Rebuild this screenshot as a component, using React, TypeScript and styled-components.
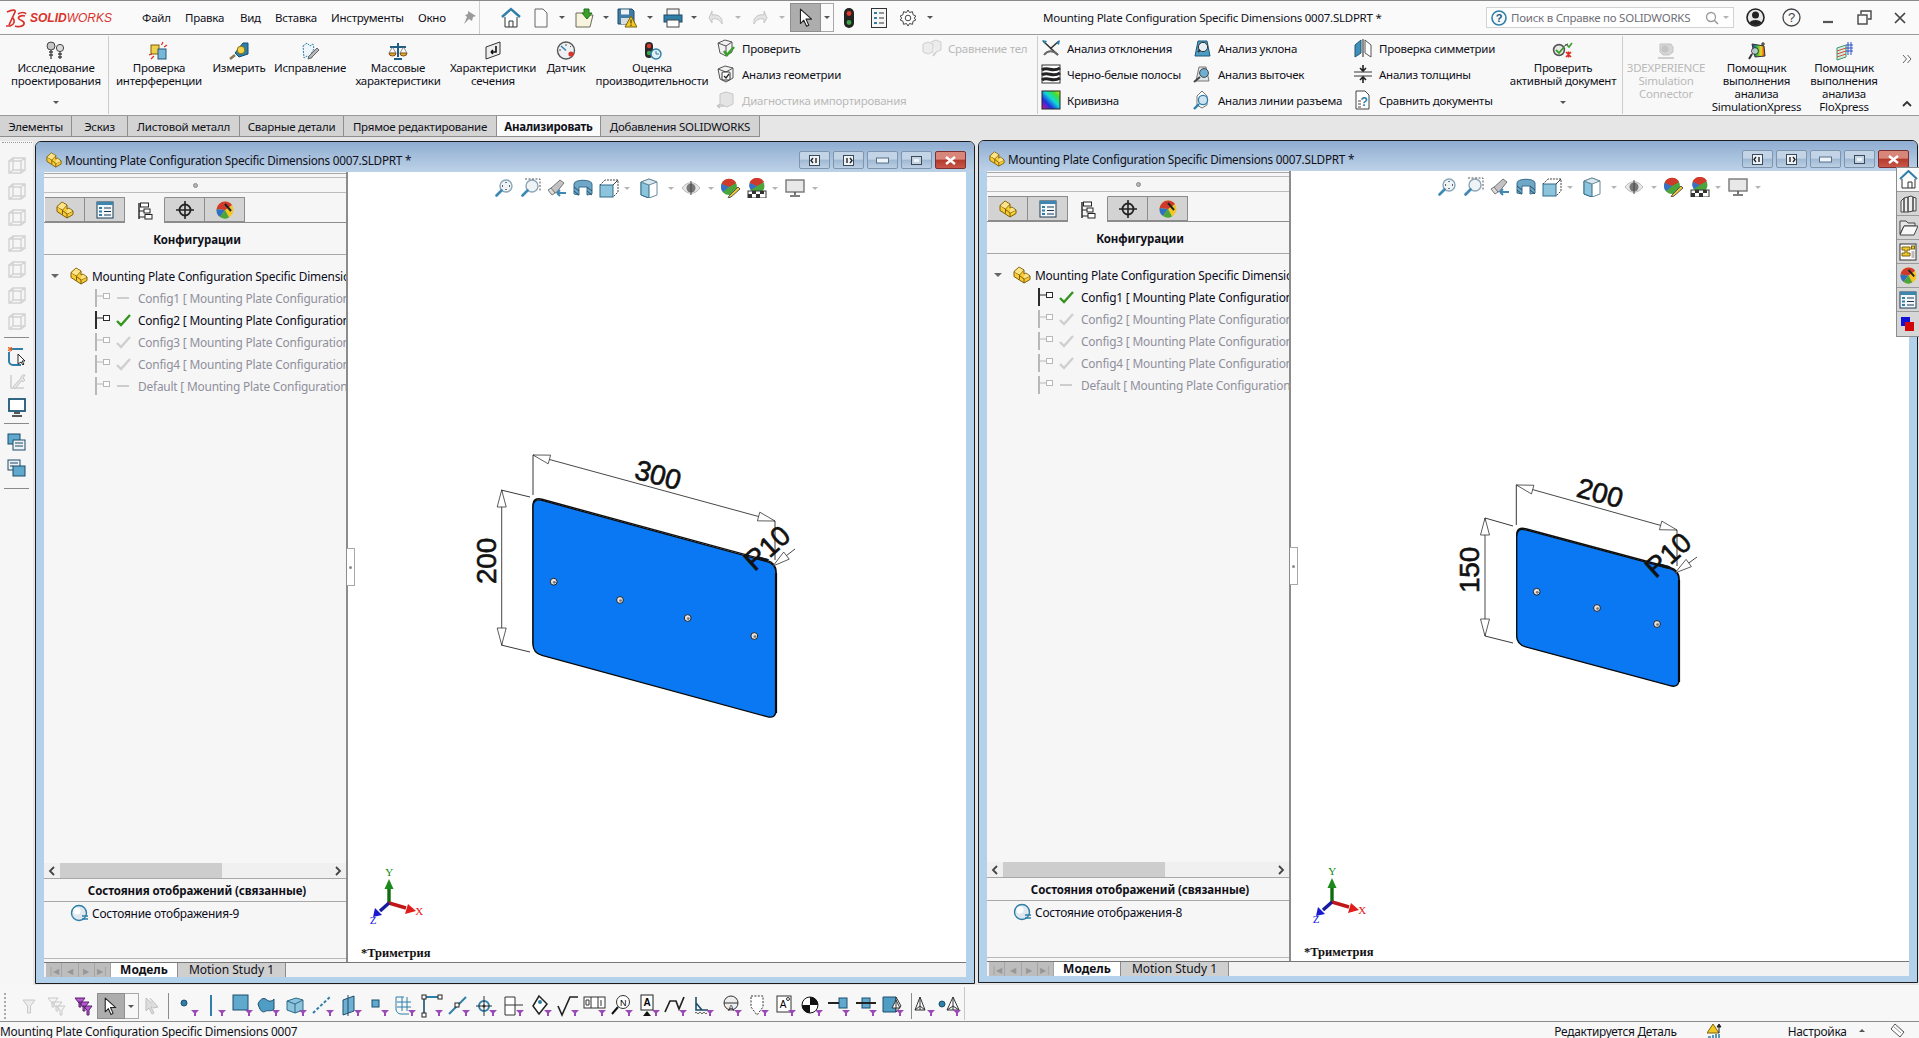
import React from 'react';
import styled, { createGlobalStyle } from 'styled-components';

const UI = '"Noto Sans", "Open Sans", sans-serif';

const Global = createGlobalStyle`
  html, body { margin: 0; padding: 0; background: #f5f5f5; overflow: hidden; }
  body { font-family: ${UI}; font-size: 11.5px; color: #101018; }
`;

const Root = styled.div`
  width: 1919px;
  height: 1038px;
  display: flex;
  flex-direction: column;
  overflow: hidden;
  letter-spacing: -0.25px;
`;

const Glyph = styled.svg`
  display: block;
  flex: none;
`;

const Ico: React.FC<{ w?: number; h?: number; vb?: string; children: React.ReactNode }> = ({ w = 20, h = 20, vb, children }) => (
  <Glyph width={w} height={h} viewBox={vb || `0 0 ${w} ${h}`}>{children}</Glyph>
);

/* ---------- title bar ---------- */

const TitleBar = styled.header`
  height: 34px;
  box-sizing: border-box;
  border-top: 1px solid #8a8a8a;
  background: #fafafa;
  display: flex;
  align-items: center;
`;

const Logo = styled.div`
  width: 142px;
  padding-left: 5px;
  box-sizing: border-box;
  display: flex;
  align-items: center;
  gap: 3px;
  color: #d9312b;
  font-family: "Liberation Sans", sans-serif;
  font-size: 12px;
  letter-spacing: 0;
  b { font-weight: 700; font-style: italic; }
  span { font-style: italic; font-weight: 400; }
`;

const Menu = styled.nav`
  display: flex;
  width: 338px;
  height: 100%;
  align-items: center;
  box-sizing: border-box;
  border-right: 1px solid #cfcfcf;
`;

const MenuItem = styled.span<{ $w: number }>`
  width: ${p => p.$w}px;
  flex: none;
`;

const Slot = styled.div<{ $w: number }>`
  width: ${p => p.$w}px;
  flex: none;
  display: flex;
  align-items: center;
  justify-content: center;
`;

const Drop = styled.i<{ $off?: boolean; $up?: boolean }>`
  display: block;
  flex: none;
  width: 0;
  height: 0;
  border-left: 3px solid transparent;
  border-right: 3px solid transparent;
  ${p => (p.$up ? 'border-bottom' : 'border-top')}: 3px solid ${p => (p.$off ? '#b5b5b5' : '#555')};
`;

const SelectBtn = styled.div<{ $low?: boolean }>`
  width: ${p => (p.$low ? 28 : 31)}px;
  height: ${p => (p.$low ? 26 : 29)}px;
  background: #adadad;
  border: 1px solid #8f8f8f;
  box-sizing: border-box;
  display: flex;
  align-items: center;
  justify-content: center;
  flex: none;
`;

const SelectDrop = styled.div<{ $low?: boolean }>`
  width: ${p => (p.$low ? 14 : 13)}px;
  height: ${p => (p.$low ? 26 : 29)}px;
  box-sizing: border-box;
  border: 1px solid #a8a8a8;
  border-left: none;
  display: flex;
  align-items: center;
  justify-content: center;
  flex: none;
`;

const DocTitle = styled.div`
  flex: 1;
  padding-left: 105px;
  white-space: nowrap;
`;

const Search = styled.div`
  width: 248px;
  height: 21px;
  flex: none;
  box-sizing: border-box;
  margin-right: 3px;
  border: 1px solid #d2d2d2;
  background: #fff;
  display: flex;
  align-items: center;
  gap: 4px;
  padding: 0 4px;
  color: #707078;
  span { flex: 1; white-space: nowrap; }
`;

const SysGlyph = styled.div<{ $w: number }>`
  width: ${p => p.$w}px;
  display: flex;
  justify-content: center;
  flex: none;
`;

/* ---------- ribbon ---------- */

const Ribbon = styled.section`
  height: 82px;
  box-sizing: border-box;
  border-top: 1px solid #9a9a9a;
  border-bottom: 1px solid #9a9a9a;
  background: #f8f8f8;
  display: flex;
`;

const BigBtn = styled.div<{ $w: number; $off?: boolean; $pl?: number }>`
  width: ${p => p.$w}px;
  flex: none;
  box-sizing: border-box;
  padding-top: 6px;
  padding-left: ${p => p.$pl || 0}px;
  display: flex;
  flex-direction: column;
  align-items: center;
  text-align: center;
  line-height: 13px;
  color: ${p => (p.$off ? '#b9b9b9' : '#101018')};
`;

const BigIcon = styled.div`
  height: 19px;
  margin-bottom: 1px;
`;

const BigDrop = styled.div`
  margin-top: auto;
  margin-bottom: 11px;
`;

const GroupSep = styled.div`
  width: 1px;
  margin: 1px 0;
  background: #cdcdcd;
  flex: none;
`;

const SmallCol = styled.div<{ $w: number; $pad: number }>`
  width: ${p => p.$w}px;
  padding-left: ${p => p.$pad}px;
  box-sizing: border-box;
  flex: none;
`;

const SmallRow = styled.div<{ $off?: boolean }>`
  height: 26px;
  display: flex;
  align-items: center;
  gap: 6px;
  white-space: nowrap;
  color: ${p => (p.$off ? '#b9b9b9' : '#101018')};
`;

const EndCol = styled.div`
  flex: 1;
  padding: 19px 7px 8px 0;
  display: flex;
  flex-direction: column;
  align-items: flex-end;
  justify-content: space-between;
`;

/* ---------- tabs under the ribbon ---------- */

const TabBar = styled.div`
  height: 21px;
  background: #e6e6e6;
  display: flex;
`;

const RibbonTab = styled.div<{ $w: number; $active?: boolean }>`
  width: ${p => p.$w}px;
  box-sizing: border-box;
  padding-top: 1px;
  border: 1px solid #8e8e8e;
  border-top: none;
  border-left: none;
  background: ${p => (p.$active ? '#fafafa' : '#d3d3d3')};
  font-weight: ${p => (p.$active ? 700 : 400)};
  display: flex;
  align-items: center;
  justify-content: center;
  white-space: nowrap;
`;

/* ---------- work area ---------- */

const Workspace = styled.main`
  height: 848px;
  background: #e6e6e6;
  position: relative;
  display: flex;
  align-items: flex-start;
`;

const Rail = styled.aside`
  width: 33px;
  height: 844px;
  margin-top: 4px;
  margin-right: 2px;
  background: #f6f6f6;
  flex: none;
  display: flex;
  flex-direction: column;
  align-items: center;
  padding-top: 1px;
  box-sizing: border-box;
`;

const RailGrip = styled.div`
  width: 30px;
  height: 2px;
  margin-bottom: 8px;
  border-top: 1px dotted #999;
`;

const RailBtn = styled.div`
  height: 26px;
  display: flex;
  align-items: center;
  justify-content: center;
`;

const RailSep = styled.div<{ $mt: number }>`
  width: 25px;
  height: 1px;
  background: #8a8a8a;
  margin: ${p => p.$mt}px 0 5px;
`;

const Win = styled.article<{ $mt: number }>`
  width: 940px;
  height: 843px;
  margin-top: ${p => p.$mt}px;
  margin-right: 3px;
  box-sizing: border-box;
  flex: none;
  border: 1px solid #1d1d1d;
  border-radius: 6px 6px 0 0;
  background: #b4d1ec;
  display: flex;
  flex-direction: column;
  overflow: hidden;
`;

const WinTitle = styled.div`
  height: 30px;
  flex: none;
  box-sizing: border-box;
  padding: 6px 8px 0 10px;
  background: linear-gradient(#8fadd1, #bdd2e8);
  display: flex;
  align-items: center;
  gap: 3px;
  font-size: 11.75px;
  span { flex: 1; white-space: nowrap; }
`;

const WinBtn = styled.div<{ $close?: boolean }>`
  width: 31px;
  height: 18px;
  box-sizing: border-box;
  border: 1px solid ${p => (p.$close ? '#7c3030' : '#7f95ad')};
  border-radius: 2px;
  background: ${p =>
    p.$close
      ? 'linear-gradient(#d9867a 0 45%, #b23a2c 50%, #c9574a)'
      : 'linear-gradient(#c3d4e6 0 45%, #9fb8d2 50%, #bcd0e4)'};
  display: flex;
  align-items: center;
  justify-content: center;
  flex: none;
`;

const Client = styled.div`
  flex: 1;
  min-height: 0;
  margin: 0 8px 6px;
  background: #fff;
  display: flex;
  flex-direction: column;
`;

const Main = styled.div`
  flex: 1;
  min-height: 0;
  display: flex;
  position: relative;
`;

const Panel = styled.div`
  width: 304px;
  flex: none;
  box-sizing: border-box;
  border-right: 2px solid #8c8c8c;
  background: #f6f6f6;
  display: flex;
  flex-direction: column;
  overflow: hidden;
`;

const PanelEdge = styled.div`
  height: 5px;
  margin-top: 1px;
  flex: none;
  box-sizing: border-box;
  border-top: 1px solid #a8a8a8;
  border-bottom: 1px solid #bcbcbc;
`;

const PanelGrip = styled.div`
  height: 15px;
  flex: none;
  box-sizing: border-box;
  border-bottom: 1px solid #bcbcbc;
  display: flex;
  align-items: center;
  justify-content: center;
  i {
    display: block;
    width: 5px;
    height: 5px;
    border-radius: 50%;
    background: #b4b4b4;
    border: 1px solid #8c8c8c;
    box-sizing: border-box;
  }
`;

const PanelTabs = styled.div`
  height: 26px;
  flex: none;
  margin-top: 4px;
  box-sizing: border-box;
  padding-left: 1px;
  display: flex;
  border-bottom: 1px solid #8c8c8c;
`;

const PanelTab = styled.div<{ $active?: boolean }>`
  width: 40px;
  height: ${p => (p.$active ? 26 : 25)}px;
  box-sizing: border-box;
  border: 1px solid #8c8c8c;
  border-left: none;
  ${p => p.$active && 'border-bottom: none; border-top: 1px solid #f6f6f6;'}
  background: ${p => (p.$active ? '#f6f6f6' : '#d3d3d3')};
  display: flex;
  align-items: center;
  justify-content: center;
`;

const PanelHead = styled.div<{ $h: number; $pt?: number }>`
  height: ${p => p.$h}px;
  flex: none;
  box-sizing: border-box;
  padding: ${p => p.$pt || 0}px 0 0 4px;
  border-bottom: 1px solid #a8a8a8;
  display: flex;
  align-items: center;
  justify-content: center;
  font-weight: 700;
  font-size: 11.5px;
  letter-spacing: -0.08px;
  white-space: nowrap;
`;

const Tree = styled.div`
  flex: 1;
  min-height: 0;
  padding-top: 10px;
  overflow: hidden;
`;

const TreeRow = styled.div<{ $indent: number; $dim?: boolean }>`
  height: 22px;
  display: flex;
  align-items: center;
  gap: 4px;
  padding-left: ${p => p.$indent}px;
  white-space: nowrap;
  color: ${p => (p.$dim ? '#8f8f9b' : '#0b0b20')};
  font-size: 11.9px;
  letter-spacing: -0.2px;
`;

const RowText = styled.span<{ $ml?: number }>`
  margin-left: ${p => p.$ml || 0}px;
`;

const Twist = styled.i`
  display: block;
  flex: none;
  width: 0;
  height: 0;
  margin-right: 7px;
  border-left: 4px solid transparent;
  border-right: 4px solid transparent;
  border-top: 4px solid #666;
`;

const Hbar = styled.div`
  height: 16px;
  flex: none;
  box-sizing: border-box;
  display: flex;
  align-items: center;
  background: #f0f0f0;
  border-bottom: 1px solid #a8a8a8;
  padding: 0 4px;
`;

const Thumb = styled.div`
  width: 162px;
  height: 100%;
  margin-left: 5px;
  background: #cdcdcd;
`;

const Fill = styled.div`
  flex: 1;
`;

const DisplayList = styled.div`
  height: 57px;
  flex: none;
  box-sizing: border-box;
  border-bottom: 1px solid #b8b8b8;
`;

const PanelFoot = styled.div`
  height: 3px;
  flex: none;
`;

const Flap = styled.div`
  position: absolute;
  z-index: 2;
  left: 303px;
  top: 376px;
  width: 8px;
  height: 38px;
  box-sizing: border-box;
  background: #fff;
  border: 1px solid #a8a8a8;
  border-left: none;
  display: flex;
  align-items: center;
  justify-content: center;
  i { display: block; width: 3px; height: 3px; border-radius: 50%; background: #8c8c8c; }
`;

const Graphics = styled.div`
  flex: 1;
  min-width: 0;
  position: relative;
  background: #fff;
`;

const Canvas = styled.svg`
  position: absolute;
  inset: 0;
  width: 100%;
  height: 100%;
`;

const ViewBar = styled.div`
  position: relative;
  display: flex;
  align-items: center;
  padding: 6px 0 0 144px;
`;

const Orient = styled.div`
  position: absolute;
  left: 13px;
  bottom: 1px;
  font-family: "Liberation Serif", serif;
  font-weight: 700;
  font-size: 12.5px;
  letter-spacing: 0;
  color: #111;
`;

const BottomBar = styled.div`
  height: 15px;
  flex: none;
  box-sizing: border-box;
  border-top: 1px solid #777;
  background: #f2f2f2;
  display: flex;
  align-items: stretch;
  padding-left: 2px;
`;

const NavCell = styled.div`
  width: 16.25px;
  box-sizing: border-box;
  background: #bdbdbd;
  border-right: 1px solid #a5a5a5;
  display: flex;
  align-items: center;
  justify-content: center;
  color: #979797;
  font-size: 8px;
  overflow: hidden;
`;

const SheetTab = styled.div<{ $w: number; $active?: boolean }>`
  width: ${p => p.$w}px;
  box-sizing: border-box;
  background: ${p => (p.$active ? '#fff' : '#cfcfcf')};
  font-weight: ${p => (p.$active ? 700 : 400)};
  font-size: 12px;
  letter-spacing: 0;
  border-right: 1px solid #8c8c8c;
  display: flex;
  align-items: center;
  justify-content: center;
  white-space: nowrap;
  line-height: 12px;
`;

const TaskPane = styled.aside`
  position: absolute;
  right: 0;
  top: 30px;
  width: 22px;
  display: flex;
  flex-direction: column;
  border-left: 1px solid #8c8c8c;
  border-top: 1px solid #8c8c8c;
  border-bottom: 1px solid #8c8c8c;
  background: #d3d3d3;
`;

const PaneTab = styled.div<{ $active?: boolean }>`
  height: 24px;
  box-sizing: border-box;
  border-bottom: 1px solid #9a9a9a;
  background: ${p => (p.$active ? '#fafafa' : '#d6d6d6')};
  display: flex;
  align-items: center;
  justify-content: center;
  &:last-child { border-bottom: none; }
`;

/* ---------- bottom toolbar, status ---------- */

const CommandBar = styled.div`
  height: 37px;
  box-sizing: border-box;
  border-bottom: 1px solid #8c8c8c;
  background: #f7f7f7;
  display: flex;
  align-items: center;
  padding: 6px 0 0 4px;
`;

const CmdGrip = styled.div`
  width: 2px;
  height: 26px;
  margin-right: 7.4px;
  border-left: 2px dotted #aaa;
`;

const CmdSlot = styled.div<{ $w?: number }>`
  width: ${p => p.$w || 27.15}px;
  flex: none;
  display: flex;
  justify-content: center;
`;

const CmdSep = styled.div`
  width: 1px;
  height: 26px;
  background: #8c8c8c;
  flex: none;
`;

const CmdEnd = styled.div`
  width: 1px;
  height: 33px;
  margin-top: -6px;
  background: #c8c8c8;
`;

const Status = styled.footer`
  height: 16px;
  box-sizing: border-box;
  padding-top: 1px;
  background: #f7f7f7;
  display: flex;
  align-items: center;
  white-space: nowrap;
  font-size: 11.9px;
`;

const StatusCell = styled.div<{ $left: number }>`
  margin-left: ${p => p.$left}px;
  display: flex;
  align-items: center;
`;

/* ---------- small icons ---------- */

const PartIcon = ({ s = 18 }: { s?: number }) => (
  <Ico w={s} h={s} vb="0 0 18 18">
    <path d="M1 5.500 6 1l5 3v4l2-1 4 3v3.500L11 17 1 10.500z" fill="#f9cb35" stroke="#7c5e08" strokeLinejoin="round" />
    <path d="M1 5.500 6.500 9 11 4M6.500 9v4.500M6.500 9.500 11 13l6-3M11 13v4" fill="none" stroke="#7c5e08" />
    <path d="M1.500 6 6 1.500l4.500 2.700-4 4.300zM11.500 8.500l1.500-1 3.500 2.800-5.500 2.500z" fill="#fde48a" />
  </Ico>
);

const ListIcon = () => (
  <Ico w={18} h={18}>
    <rect x="1" y="1" width="16" height="16" fill="#f4f7fa" stroke="#1b3a52" />
    <rect x="1" y="1" width="16" height="3" fill="#3d86b0" />
    <path d="M3 7h3M3 10.500h3M3 14h3" stroke="#2f7fa8" strokeWidth="2" />
    <path d="M8 7h7M8 10.500h7M8 14h7" stroke="#1b3a52" />
  </Ico>
);

const ConfigIcon = ({ dim, s = 18 }: { dim?: boolean; s?: number }) => {
  const c = dim ? '#b8b8b8' : '#2b2b2b';
  return (
    <Ico w={s} h={s} vb="0 0 18 18">
      <path d="M2 0v18" stroke={c} strokeWidth="2" />
      <path d="M2 7h8" stroke={c} />
      <rect x="9.500" y="4.500" width="6" height="5" fill="#fff" stroke={c} />
    </Ico>
  );
};

const TreeIcon = () => (
  <Ico w={18} h={18}>
    <path d="M3 1v16" stroke="#222" strokeWidth="1.400" />
    <rect x="4.500" y="1" width="8" height="4" fill="#fff" stroke="#222" />
    <rect x="8" y="7" width="6" height="4" fill="#fff" stroke="#222" />
    <rect x="9" y="12.500" width="7" height="4.500" fill="#fff" stroke="#222" />
    <path d="M3 9h5M3 15h6" stroke="#222" />
  </Ico>
);

const Crosshair = () => (
  <Ico w={18} h={18}>
    <circle cx="9" cy="9" r="5.500" fill="none" stroke="#222" strokeWidth="1.800" />
    <path d="M9 0v18M0 9h18" stroke="#222" strokeWidth="1.600" />
  </Ico>
);

const Ball = ({ s = 18 }: { s?: number }) => (
  <Ico w={s} h={s} vb="0 0 18 18">
    <circle cx="9" cy="9" r="8.500" fill="#f3c52b" />
    <path d="M9 9 .6 8A8.500 8.500 0 0 1 9 .5 8.500 8.500 0 0 1 16 4z" fill="#d03a2c" />
    <path d="M9 9 .6 8A8.500 8.500 0 0 0 4 16z" fill="#2f6fc4" />
    <path d="M9 9 4 16a8.500 8.500 0 0 0 9 .5z" fill="#4aa63c" />
    <path d="M9 3l6 7" stroke="#222" strokeWidth="2" />
  </Ico>
);

const Check = ({ dim }: { dim?: boolean }) => (
  <Ico w={15} h={14}>
    <path d="M1 8l4 4L14 2" fill="none" stroke={dim ? '#cfcfcf' : '#35941e'} strokeWidth="2.400" />
  </Ico>
);

const Dash = () => (
  <Ico w={15} h={14}>
    <path d="M1 7h12" stroke="#c4c4c4" strokeWidth="1.600" />
  </Ico>
);

const GhostCube = () => (
  <Ico w={18} h={18}>
    <path d="M1 4h12v12H1zM5 1h12v12H5zM1 4l4-3M13 4l4-3M13 16l4-3M1 16l4-3" fill="none" stroke="#d2d2d2" strokeWidth="1.400" />
  </Ico>
);

const Arrow = ({ s = 18 }: { s?: number }) => (
  <Ico w={s} h={s} vb="0 0 18 18">
    <path d="M4 1v13l3-3 2.500 5.500 2-1L9 10h5z" fill="#fff" stroke="#222" strokeLinejoin="round" />
  </Ico>
);

const Lens = ({ fill = '#cfe2ee', ring = '#8aa6b8' }: { fill?: string; ring?: string }) => (
  <>
    <circle cx="11" cy="8" r="6" fill={fill} stroke={ring} strokeWidth="1.400" />
    <path d="M6.500 12.500 1.500 17.500" stroke="#3e88b4" strokeWidth="2.600" strokeLinecap="round" />
  </>
);

const BlueCube = () => (
  <>
    <path d="M2 6l9-3 7 2v10l-8 3-8-3z" fill="#8cc4dc" stroke="#2e6a8a" />
    <path d="M2 6l8 3 8-4M10 9v9" fill="none" stroke="#2e6a8a" />
  </>
);

/* ribbon icons */
const Rb = {
  Bolts: () => (
    <Ico w={20} h={19}>
      <circle cx="5" cy="5" r="4" fill="#c6c6c6" stroke="#444" />
      <circle cx="14" cy="7" r="3.600" fill="#dcdcdc" stroke="#444" />
      <path d="M5 9v9M3 11h4M3 14h4M14 11v7M12 13h4M12 16h4" stroke="#444" strokeWidth="1.300" />
    </Ico>
  ),
  Interf: () => (
    <Ico w={20} h={19}>
      <rect x="2" y="4" width="8" height="9" fill="#f0cf4a" stroke="#80620a" />
      <rect x="9" y="8" width="8" height="10" fill="#79b7d8" stroke="#24597a" />
      <path d="M14 1l-1.500 3M18 4l-3 2M2 18l3-3M0 14l3-1" stroke="#e02a1e" strokeWidth="1.200" />
    </Ico>
  ),
  Measure: () => (
    <Ico w={20} h={19}>
      <path d="M6 12 14 2h5v11l-9 3z" fill="#2c7fa8" stroke="#17506e" />
      <circle cx="12" cy="9" r="3.800" fill="#f2d44a" stroke="#8a6e10" />
      <path d="M1 18l5-4" stroke="#8a7a50" strokeWidth="2.600" />
    </Ico>
  ),
  Repair: () => (
    <Ico w={20} h={19}>
      <path d="M3 5l4-3 3 3 3-2 1 5-3 5 1 4-5-2-3 2z" fill="#eef6fb" stroke="#2c7fa8" strokeDasharray="2 1" />
      <path d="M9 15l8-8 2 2-8 8-3 1z" fill="#b8b8b8" stroke="#666" />
    </Ico>
  ),
  Scale: () => (
    <Ico w={20} h={19}>
      <path d="M10 2v14M2 6h16" stroke="#1f5f86" strokeWidth="2" />
      <path d="M1 12a3.500 3 0 0 0 7 0zM12 12a3.500 3 0 0 0 7 0z" fill="#e8a63a" stroke="#7a5210" />
      <path d="M4.500 6 1 12M4.500 6 8 12M15.500 6 12 12M15.500 6 19 12" stroke="#666" strokeWidth=".7" />
      <path d="M6 18h8" stroke="#1f5f86" strokeWidth="2" />
    </Ico>
  ),
  Section: () => (
    <Ico w={20} h={19}>
      <path d="M3 6l14-5v12L3 18z" fill="#eee" stroke="#333" />
      <path d="M13 5v6H8M8 11l2-2M8 11l2 2" fill="none" stroke="#111" strokeWidth="1.600" />
    </Ico>
  ),
  Gauge: () => (
    <Ico w={20} h={19}>
      <circle cx="10" cy="9.500" r="8.500" fill="#eef1f3" stroke="#555" strokeWidth="1.400" />
      <path d="M10 9.500 5 5" stroke="#2c7fa8" strokeWidth="1.400" />
      <path d="M3 9h2M10 3v2M15 5l-1 1" stroke="#555" />
      <circle cx="15" cy="13" r="2.600" fill="#d8372b" />
    </Ico>
  ),
  Perf: () => (
    <Ico w={20} h={19}>
      <rect x="3" y="1" width="8" height="16" rx="4" fill="#2a2a2a" />
      <circle cx="7" cy="5" r="2.200" fill="#e03a2c" />
      <circle cx="7" cy="12" r="2.200" fill="#3aa548" />
      <circle cx="14" cy="13" r="5" fill="#e4eef5" stroke="#2c7fa8" strokeWidth="1.400" />
      <path d="M14 10v3h3" stroke="#2c7fa8" fill="none" />
    </Ico>
  ),
  CheckCube: () => (
    <Ico w={20} h={20}>
      <path d="M2 5l7-3 7 2v10l-6 4-6-3z" fill="#f1f1f1" stroke="#555" />
      <path d="M2 5l8 3 6-4M10 8v10" fill="none" stroke="#555" />
      <path d="M8 13l3 4 7-8" fill="none" stroke="#3aa02a" strokeWidth="2.600" />
    </Ico>
  ),
  GeoCube: () => (
    <Ico w={20} h={20}>
      <path d="M2 5l7-3 8 2v10l-7 4-6-3z" fill="#f1f1f1" stroke="#555" />
      <path d="M2 5l8 3 7-4" fill="none" stroke="#555" />
      <rect x="6" y="8" width="8" height="8" rx="1" fill="#fff" stroke="#333" />
      <path d="M8 12l2 2 3-4" fill="none" stroke="#222" strokeWidth="1.300" />
    </Ico>
  ),
  Diag: () => (
    <Ico w={20} h={20}>
      <path d="M4 4l6-2 7 2v10l-6 3-7-3z" fill="#e4e4e4" stroke="#c6c6c6" />
      <path d="M1 16h7M1 16l3-2M1 16l3 2" fill="none" stroke="#c6c6c6" strokeWidth="1.400" />
    </Ico>
  ),
  Bodies: () => (
    <Ico w={20} h={20}>
      <path d="M1 6l5-2 5 2v8l-5 2-5-2zM9 4l5-2 5 2v8l-5 2" fill="#ececec" stroke="#cfcfcf" />
      <path d="M14 14l-3 4" stroke="#cfcfcf" strokeWidth="2" />
    </Ico>
  ),
  Deviation: () => (
    <Ico w={20} h={20}>
      <path d="M2 3l15 14M18 3 9 11" stroke="#333" strokeWidth="1.600" />
      <path d="M1 2l5 1-2 3zM19 2l-1 5-3-2z" fill="#2c7fa8" />
      <path d="M3 17c4-5 9-5 14 0" fill="none" stroke="#666" strokeWidth="2" />
    </Ico>
  ),
  Zebra: () => (
    <Ico w={20} h={20}>
      <rect x="1" y="1" width="18" height="18" fill="#fff" stroke="#333" />
      <path d="M1 6c6-4 10 3 18-2M1 11c6-4 10 3 18-2M1 16c6-4 10 3 18-2" fill="none" stroke="#222" strokeWidth="3" />
    </Ico>
  ),
  Curv: () => (
    <Ico w={20} h={20}>
      <defs>
        <linearGradient id="curvA" x1="0" y1="1" x2="1" y2="0">
          <stop offset="0" stopColor="#e0108c" />
          <stop offset=".3" stopColor="#2030e0" />
          <stop offset=".55" stopColor="#10d8d8" />
          <stop offset=".8" stopColor="#40e030" />
          <stop offset="1" stopColor="#f0e020" />
        </linearGradient>
      </defs>
      <rect x="1" y="1" width="18" height="18" fill="url(#curvA)" stroke="#222" />
    </Ico>
  ),
  Draft: () => (
    <Ico w={20} h={20}>
      <path d="M3 18 6 3h9l3 15z" fill="#4d9cc4" stroke="#1d5878" />
      <circle cx="11" cy="9" r="4.600" fill="#e8eff3" stroke="#333" />
      <path d="M6 14l2-2" stroke="#333" strokeWidth="2" />
    </Ico>
  ),
  Undercut: () => (
    <Ico w={20} h={20}>
      <path d="M4 17 7 3h7l3 14z" fill="#dfe6ea" stroke="#777" />
      <circle cx="12" cy="9" r="4.400" fill="#6fb0d2" stroke="#444" />
      <path d="M8 13l-6 5" stroke="#444" strokeWidth="2" />
    </Ico>
  ),
  Parting: () => (
    <Ico w={20} h={20}>
      <path d="M5 6l5-5 5 5v9l-5 3-5-3z" fill="#fff" stroke="#777" />
      <circle cx="11" cy="10" r="4.600" fill="#cfe4f0" stroke="#2c7fa8" strokeWidth="1.300" />
      <path d="M7 14l-5 5" stroke="#2c7fa8" strokeWidth="2.400" />
    </Ico>
  ),
  Symmetry: () => (
    <Ico w={20} h={20}>
      <path d="M8 2 2 7v12l6-4z" fill="#3f8fba" stroke="#1d5878" />
      <path d="M10 1v18" stroke="#222" />
      <path d="M12 2l6 5v12l-6-4z" fill="#fff" stroke="#555" />
    </Ico>
  ),
  Thick: () => (
    <Ico w={20} h={20}>
      <path d="M1 8h18M1 12h18" stroke="#777" strokeWidth="1.400" />
      <path d="M10 1v5M7 4l3 3 3-3M10 19v-5M7 16l3-3 3 3" fill="none" stroke="#222" strokeWidth="1.600" />
    </Ico>
  ),
  Compare: () => (
    <Ico w={20} h={20}>
      <path d="M3 1h9l4 4v14H3z" fill="#fff" stroke="#444" />
      <text x="11" y="16" fontSize="12" fontWeight="700" fill="#2c7fa8" textAnchor="middle" fontFamily="Liberation Sans">?</text>
      <path d="M5 11h3M5 14h3M5 17h3" stroke="#444" />
    </Ico>
  ),
  Active: () => (
    <Ico w={22} h={19}>
      <circle cx="7" cy="9" r="5.400" fill="#e8e8e8" stroke="#555" strokeWidth="1.600" />
      <path d="M4 9l3 3 5-6" fill="none" stroke="#3aa02a" strokeWidth="1.800" />
      <path d="M11 6l5-3M13 4l3-1" stroke="#555" />
      <path d="M15 4l2 2 3-4" fill="none" stroke="#3aa02a" strokeWidth="1.600" />
      <path d="M14 16l5-5M14 11l5 5M16.500 10.500v6" stroke="#e02a1e" strokeWidth="1.600" />
    </Ico>
  ),
  Exp: () => (
    <Ico w={20} h={19}>
      <path d="M4 3h11l2 3v5l-4 3H7l-3-3z" fill="#d6d6d6" stroke="#c4c4c4" />
      <circle cx="9" cy="8" r="3.500" fill="#c4c4c4" />
      <path d="M2 17h16" stroke="#c4c4c4" strokeWidth="1.600" />
    </Ico>
  ),
  Xpress: () => (
    <Ico w={20} h={20}>
      <defs>
        <linearGradient id="xpA" x1="0" y1="0" x2="1" y2="0">
          <stop offset="0" stopColor="#2230c8" />
          <stop offset=".4" stopColor="#30c040" />
          <stop offset=".7" stopColor="#f0d820" />
          <stop offset="1" stopColor="#e02a1e" />
        </linearGradient>
      </defs>
      <path d="M5 3l12 2 1 10-10 1z" fill="url(#xpA)" stroke="#333" />
      <circle cx="8" cy="10" r="3.400" fill="#e4eef5" fillOpacity=".7" stroke="#333" />
      <path d="M5 13l-3 5" stroke="#333" strokeWidth="2" />
      <path d="M16 1v4M14 3h4" stroke="#222" />
    </Ico>
  ),
  Flo: () => (
    <Ico w={20} h={20}>
      <path d="M3 7l9-3v12l-9 3z" fill="#d0efe0" stroke="#3a9a6a" />
      <path d="M3 10l9-3M3 13l9-3M3 16l9-3" stroke="#d8372b" strokeWidth=".9" />
      <path d="M14 1v13M17 1v13M12 4h7M12 7h7M12 10h7" stroke="#2a50c8" />
    </Ico>
  ),
};

/* filter glyph for the selection toolbar */
const Pick = ({ children }: { children: React.ReactNode }) => (
  <Ico w={26} h={24}>
    {children}
    <path d="M15 16h8l-3 3v3h-2v-3z" fill="#9a4ab5" />
  </Ico>
);

const B = '#2f7fa8';
const D = '#1c4e6c';

const picks: React.ReactNode[] = [
  <circle key="0" cx="8" cy="9" r="3" fill={B} stroke={D} />,
  <path key="1" d="M8 1v21" stroke={B} strokeWidth="2" />,
  <rect key="2" x="3" y="1" width="15" height="15" fill="#5ea9cd" stroke={D} />,
  <path key="3" d="M1 10c3-7 7-6 9-4s6 1 7-1v10c-3 3-6 1-8 2s-5 3-8-7z" fill="#4f9cc4" stroke={D} />,
  <g key="4" transform="translate(1,1)"><BlueCube /></g>,
  <path key="5" d="M2 19 20 2" stroke={B} strokeWidth="2" strokeDasharray="3 2" />,
  <path key="6" d="M4 6l11-4v15L4 21zM9 1v21" fill="#6fb0d2" stroke={D} />,
  <rect key="7" x="6" y="6" width="7" height="7" fill="#5ea9cd" stroke={D} />,
  <path key="8" d="M3 3h8M3 3v12a5 5 0 0 0 5 5h8M4 8h14M4 13h14M9 3v14M14 3v14" fill="none" stroke={B} strokeWidth="1" />,
  <g key="9"><path d="M4 3v18" stroke={D} strokeWidth="1.600" /><path d="M4 3h16" stroke={B} strokeWidth="2" /><rect x="2" y="1" width="4" height="4" fill="#fff" stroke="#222" /><rect x="18" y="1" width="4" height="4" fill="#fff" stroke="#222" /><rect x="2" y="19" width="4" height="4" fill="#fff" stroke="#222" /></g>,
  <g key="10"><path d="M2 20 19 3" stroke={B} strokeWidth="2" /><rect x="8" y="9" width="4" height="4" fill="#fff" stroke="#222" /></g>,
  <g key="11"><circle cx="10" cy="12" r="5" fill="none" stroke={B} strokeWidth="2" /><circle cx="10" cy="12" r="1.500" fill="#222" /><path d="M10 2v20M2 12h16" stroke="#333" /></g>,
  <path key="12" d="M4 3h10v18H4zM4 11h18" fill="#fff" stroke="#333" />,
  <g key="13"><path d="M10 2l8 8-8 10-6-8z" fill="#fff" stroke="#222" strokeWidth="1.500" /><circle cx="11" cy="8" r="2" fill={B} /></g>,
  <path key="14" d="M2 12l4 9L14 3h8" fill="none" stroke="#222" strokeWidth="1.600" />,
  <g key="15"><rect x="1" y="3" width="21" height="11" fill="#fff" stroke="#333" /><path d="M8 3v11M15 3v11M3 6h3v5H3zM18 6v6" stroke="#333" fill="none" /></g>,
  <g key="16"><circle cx="13" cy="8" r="6.500" fill="#fff" stroke="#333" /><path d="M8 13l-6 7" stroke="#111" strokeWidth="2" /><text x="13" y="11.500" fontSize="9" textAnchor="middle" fontFamily="Liberation Sans">N</text></g>,
  <g key="17"><rect x="4" y="1" width="12" height="15" fill="#fff" stroke="#222" /><text x="10" y="12" fontSize="10" fontWeight="700" textAnchor="middle" fontFamily="Liberation Sans">A</text><path d="M10 17l-4 5h8z" fill="#111" /></g>,
  <path key="18" d="M1 18l5-11h6l3 8 5-12" fill="none" stroke="#222" strokeWidth="1.700" />,
  <g key="19"><path d="M5 3v13h12M5 9l6 7" fill="none" stroke={D} strokeWidth="1.600" /><path d="M4 19c2-2 2 2 4 0s2 2 4 0 2 2 4 0" fill="none" stroke="#333" /></g>,
  <g key="20"><circle cx="12" cy="9" r="7" fill="#eee" stroke="#333" /><path d="M5 9h14" stroke="#333" /><text x="12" y="17" fontSize="9" textAnchor="middle" fontFamily="Liberation Sans">A</text></g>,
  <path key="21" d="M5 2h12v11l-6 8-6-8z" fill="#fff" stroke="#333" strokeDasharray="2 1.400" />,
  <g key="22"><rect x="4" y="2" width="14" height="16" fill="#fff" stroke="#333" /><text x="10" y="14" fontSize="10" textAnchor="middle" fontFamily="Liberation Sans">A</text><circle cx="15" cy="5" r="1.500" fill="none" stroke="#333" /></g>,
  <g key="23"><circle cx="10" cy="11" r="8" fill="#fff" stroke="#111" /><path d="M10 11V3a8 8 0 0 1 8 8zM10 11v8a8 8 0 0 1-8-8z" fill="#111" /></g>,
  <g key="24"><rect x="12" y="4" width="8" height="10" fill="#5ea9cd" stroke={D} /><path d="M1 9h11" stroke="#222" strokeWidth="2" /></g>,
  <g key="25"><rect x="8" y="4" width="8" height="10" fill="#5ea9cd" stroke={D} /><path d="M2 9h20" stroke="#222" strokeWidth="2" /></g>,
  <g key="26"><path d="M2 3h13v15H2z" fill="#4f9cc4" stroke={D} /><path d="M15 3l5 9-5 6zM11 14l4-8 4 8z" fill="#fff" stroke="#333" /></g>,
];

const lastPicks: React.ReactNode[] = [
  <path key="a" d="M8 3 3 16h10zM8 3v13M3 16l5-4 5 4" fill="#fff" stroke="#333" />,
  <g key="b"><circle cx="4" cy="10" r="3" fill={B} stroke={D} /><path d="M15 3 9 16h12zM15 3v13M9 16l6-4 6 4" fill="#fff" stroke="#333" /></g>,
];

/* view toolbar */
const ViewIcons = {
  Fit: () => <Ico w={20} h={20}><Lens fill="#eef3f6" /><path d="M11 4v1M11 11v1M7 8h1M14 8h1" stroke="#333" strokeWidth="1.300" /></Ico>,
  Area: () => <Ico w={20} h={20}><Lens fill="#eef3f6" /><path d="M4 1h15v13" fill="none" stroke="#555" strokeDasharray="2 1.500" /></Ico>,
  Prev: () => (
    <Ico w={20} h={20}>
      <path d="M2 12 13 2l4 3-8 10z" fill="#c2c2c2" stroke="#777" />
      <path d="M1 12l4 5 3-2-4-5z" fill="#ddd" stroke="#777" />
      <path d="M10 15h9M10 15l3-3M10 15l3 3" fill="none" stroke="#3e88b4" strokeWidth="2" />
    </Ico>
  ),
  Section: () => (
    <Ico w={20} h={20}>
      <path d="M1 6c0-5 18-5 18 0v10l-5 1V9H6v8l-5-1z" fill="#6fa8c6" stroke="#3a6d8a" />
      <path d="M1 9l5 4M1 13l5 4M14 9l5 4M14 13l5 4" stroke="#20506c" />
    </Ico>
  ),
  Cube: () => (
    <Ico w={20} h={20}>
      <rect x="1" y="7" width="13" height="12" fill="#8cc4dc" stroke="#2e6a8a" />
      <path d="M1 7l5-5h13v12l-5 5" fill="none" stroke="#444" strokeDasharray="2 1" />
      <path d="M14 7l5-5" stroke="#444" />
    </Ico>
  ),
  Shade: () => (
    <Ico w={20} h={20}>
      <path d="M2 4l8-3 8 3v13l-8 3-8-3z" fill="#fff" stroke="#6a8a9a" />
      <path d="M2 4l8 3v13l-8-3z" fill="#8cc4dc" stroke="#2e6a8a" />
      <path d="M2 4l8-3 8 3-8 3z" fill="#d6e8f0" stroke="#6a8a9a" />
    </Ico>
  ),
  Eye: () => (
    <Ico w={20} h={20}>
      <path d="M1 10c5-7 13-7 18 0-5 7-13 7-18 0z" fill="#e6e6e6" stroke="#bbb" />
      <circle cx="10" cy="10" r="4.500" fill="#777" />
      <path d="M10 3v14" stroke="#444" />
    </Ico>
  ),
  Paint: () => (
    <Ico w={20} h={20}>
      <circle cx="9" cy="9" r="8" fill="#4aa63c" />
      <path d="M9 9 1.500 6A8 8 0 0 1 16 5z" fill="#d03a2c" />
      <path d="M9 9 1.500 6A8 8 0 0 0 3 14z" fill="#3a6fc8" />
      <path d="M9 18 18 9l2 2-9 8-3 1z" fill="#f2c832" stroke="#555" />
    </Ico>
  ),
  Scene: () => (
    <Ico w={20} h={20}>
      <circle cx="10" cy="8" r="7.500" fill="#4aa63c" />
      <path d="M10 8 2.500 5A8 8 0 0 1 17 4z" fill="#d03a2c" />
      <path d="M10 8 2.500 5A8 8 0 0 0 4 12z" fill="#3a6fc8" />
      <rect x="1" y="13" width="18" height="7" fill="#fff" stroke="#333" />
      <path d="M1 16h4v4H1zM9 16h4v4H9zM5 13h4v3H5zM13 13h4v3h-4z" fill="#333" />
    </Ico>
  ),
  Monitor: () => (
    <Ico w={20} h={20}>
      <rect x="1" y="2" width="18" height="12" fill="#e8e8e8" stroke="#777" strokeWidth="1.400" />
      <path d="M10 14v3M5 18h10" stroke="#555" strokeWidth="1.600" />
    </Ico>
  ),
};

const ViewSlot = styled.div<{ $w: number }>`
  width: ${p => p.$w}px;
  flex: none;
  display: flex;
  justify-content: center;
`;

const ViewDrop = styled.div`
  width: 10px;
  flex: none;
  display: flex;
  justify-content: center;
`;

const ViewToolbar = () => (
  <ViewBar>
    <ViewSlot $w={26}><ViewIcons.Fit /></ViewSlot>
    <ViewSlot $w={26}><ViewIcons.Area /></ViewSlot>
    <ViewSlot $w={26}><ViewIcons.Prev /></ViewSlot>
    <ViewSlot $w={26}><ViewIcons.Section /></ViewSlot>
    <ViewSlot $w={26}><ViewIcons.Cube /></ViewSlot>
    <ViewDrop><Drop $off /></ViewDrop>
    <ViewSlot $w={34}><ViewIcons.Shade /></ViewSlot>
    <ViewDrop><Drop $off /></ViewDrop>
    <ViewSlot $w={30}><ViewIcons.Eye /></ViewSlot>
    <ViewDrop><Drop $off /></ViewDrop>
    <ViewSlot $w={28}><ViewIcons.Paint /></ViewSlot>
    <ViewSlot $w={26}><ViewIcons.Scene /></ViewSlot>
    <ViewDrop><Drop $off /></ViewDrop>
    <ViewSlot $w={30}><ViewIcons.Monitor /></ViewSlot>
    <ViewDrop><Drop $off /></ViewDrop>
  </ViewBar>
);

/* ---------- the part drawing ---------- */

type Pt = [number, number];

const platePath = (x: number, y: number, w: number, h: number, k: number, r: number) => {
  const dy = w * k;
  return [
    `M${x},${y + r}`,
    `Q${x},${y} ${x + r},${y + r * k}`,
    `L${x + w - r},${y + dy - r * k}`,
    `Q${x + w},${y + dy} ${x + w},${y + dy + r}`,
    `L${x + w},${y + dy + h - r}`,
    `Q${x + w},${y + dy + h} ${x + w - r},${y + dy + h - r * k}`,
    `L${x + r},${y + h + r * k}`,
    `Q${x},${y + h} ${x},${y + h - r}`,
    'Z',
  ].join(' ');
};

const head = (tip: Pt, to: Pt) => {
  const ang = Math.atan2(to[1] - tip[1], to[0] - tip[0]);
  const l = 17;
  const hw = 4.5;
  const bx = tip[0] + Math.cos(ang) * l;
  const by = tip[1] + Math.sin(ang) * l;
  const nx = -Math.sin(ang) * hw;
  const ny = Math.cos(ang) * hw;
  return `${tip[0]},${tip[1]} ${bx + nx},${by + ny} ${bx - nx},${by - ny}`;
};

const Dim: React.FC<{ a: Pt; b: Pt; ext: [Pt, Pt][]; label: string; at: Pt; rot: number }> = ({ a, b, ext, label, at, rot }) => (
  <g>
    <line x1={a[0]} y1={a[1]} x2={b[0]} y2={b[1]} stroke="#333" strokeWidth="0.9" />
    {ext.map((e, i) => (
      <line key={i} x1={e[0][0]} y1={e[0][1]} x2={e[1][0]} y2={e[1][1]} stroke="#222" strokeWidth="0.9" />
    ))}
    <polygon points={head(a, b)} fill="#fff" stroke="#333" strokeWidth="0.8" />
    <polygon points={head(b, a)} fill="#fff" stroke="#333" strokeWidth="0.8" />
    <text
      x={at[0]}
      y={at[1]}
      fontFamily="Liberation Sans, sans-serif"
      fontSize="28"
      fill="#111"
      stroke="#111"
      strokeWidth="0.6"
      textAnchor="middle"
      dominantBaseline="central"
      transform={`rotate(${rot} ${at[0]} ${at[1]})`}
    >
      {label}
    </text>
  </g>
);

type PartSpec = {
  view: string;
  x: number; y: number; w: number; h: number; k: number;
  holes: Pt[];
  wide: { a: Pt; b: Pt; ext: [Pt, Pt][]; label: string; at: Pt };
  tall: { a: Pt; b: Pt; ext: [Pt, Pt][]; label: string; at: Pt };
  radius: { at: Pt; from: Pt; tip: Pt };
  origin: Pt;
};

const Part = ({ spec }: { spec: PartSpec }) => {
  const { x, y, w, h, k, origin: o } = spec;
  return (
    <Canvas viewBox={spec.view} preserveAspectRatio="xMinYMin slice">
      <path d={platePath(x, y, w, h, k, 9)} transform="translate(0,-1.2)" fill="none" stroke="#111" strokeWidth="1.4" />
      <path d={platePath(x, y, w, h, k, 9)} fill="#0a78f2" stroke="#0a0a0a" strokeWidth="1.3" />
      <path d={`M${x + w},${y + w * k + 9} V${y + w * k + h - 6}`} stroke="#0a0a0a" strokeWidth="2.2" />
      {spec.holes.map((p, i) => (
        <g key={i}>
          <circle cx={p[0]} cy={p[1]} r="3.4" fill="#e4e4e4" stroke="#111" strokeWidth="0.9" />
          <circle cx={p[0] + 0.6} cy={p[1] + 0.6} r="1.4" fill="#777" />
        </g>
      ))}
      <Dim {...spec.wide} rot={15.2} />
      <Dim {...spec.tall} rot={-90} />
      <line x1={spec.radius.from[0]} y1={spec.radius.from[1]} x2={spec.radius.tip[0]} y2={spec.radius.tip[1]} stroke="#333" strokeWidth="0.9" />
      <polygon points={head(spec.radius.tip, spec.radius.from)} fill="#fff" stroke="#333" strokeWidth="0.8" />
      <text
        x={spec.radius.at[0]}
        y={spec.radius.at[1]}
        fontFamily="Liberation Sans, sans-serif"
        fontSize="28"
        fill="#111"
        stroke="#111"
        strokeWidth="0.6"
        textAnchor="middle"
        dominantBaseline="central"
        transform={`rotate(-42 ${spec.radius.at[0]} ${spec.radius.at[1]})`}
      >
        R10
      </text>
      {/* triad */}
      <path d={`M${o[0]},${o[1]} V${o[1] - 14}`} stroke="#0e6e0e" strokeWidth="3.4" />
      <path d={`M${o[0]},${o[1] - 24} l4.5,10 h-9z`} fill="#1b8a1b" />
      <path d={`M${o[0]},${o[1]} L${o[0] + 17},${o[1] + 5}`} stroke="#c01818" strokeWidth="3.4" />
      <path d={`M${o[0] + 27},${o[1] + 8} l-11,3 l3,-10z`} fill="#e01c1c" />
      <path d={`M${o[0]},${o[1]} L${o[0] - 9},${o[1] + 8}`} stroke="#1a1aa0" strokeWidth="3.4" />
      <path d={`M${o[0] - 16},${o[1] + 14} l2,-9 l7,7z`} fill="#1a1ad0" />
      <text x={o[0]} y={o[1] - 27} fontFamily="Liberation Serif, serif" fontSize="11" fill="#0a8a0a" textAnchor="middle">Y</text>
      <text x={o[0] + 30} y={o[1] + 12} fontFamily="Liberation Serif, serif" fontSize="11" fill="#e81010" textAnchor="middle">X</text>
      <text x={o[0] - 16} y={o[1] + 21} fontFamily="Liberation Serif, serif" fontSize="11" fill="#1414e0" textAnchor="middle">Z</text>
    </Canvas>
  );
};

const plateA: PartSpec = {
  view: '348 172 618 790',
  x: 533, y: 498, w: 243, h: 155, k: 0.272,
  holes: [[553.7, 581.7], [620, 600], [687.7, 618], [754.3, 636]],
  wide: { a: [533, 455], b: [775, 521], ext: [[[533, 455], [533, 495]], [[775, 521], [775, 560]]], label: '300', at: [658, 475] },
  tall: { a: [501.7, 490], b: [501.7, 645], ext: [[[501, 490], [530, 497]], [[501, 645], [530, 652]]], label: '200', at: [486, 561] },
  radius: { at: [767, 548], from: [795, 549], tip: [773, 566] },
  origin: [389, 903],
};

const plateB: PartSpec = {
  view: '1291 171 618 790',
  x: 1516.7, y: 527.5, w: 162.3, h: 117, k: 0.269,
  holes: [[1536.7, 591.7], [1597, 608], [1657, 624]],
  wide: { a: [1516.3, 485], b: [1677, 530], ext: [[[1516.3, 485], [1516.3, 525]], [[1677, 530], [1677, 566]]], label: '200', at: [1600, 493] },
  tall: { a: [1485, 518], b: [1485, 636], ext: [[[1485, 518], [1513, 526]], [[1485, 636], [1513, 643]]], label: '150', at: [1469, 570] },
  radius: { at: [1668, 555], from: [1697, 557], tip: [1675, 573] },
  origin: [1332, 902],
};

/* ---------- document window ---------- */

const Chev = ({ dir }: { dir: 'l' | 'r' }) => (
  <Ico w={7} h={10}>
    <path d={dir === 'l' ? 'M6 1 2 5l4 4' : 'M1 1l4 4-4 4'} fill="none" stroke="#444" strokeWidth="1.800" />
  </Ico>
);

const WinGlyph = ({ d }: { d: string }) => (
  <Ico w={11} h={11}>
    <rect x=".5" y=".5" width="10" height="10" fill="#eef3f8" stroke="#3a4a5a" />
    <path d={d} fill="none" stroke="#222" strokeWidth="1.400" />
  </Ico>
);

const DisplayIcon = () => (
  <Ico w={18} h={18}>
    <circle cx="9" cy="9" r="7.500" fill="#dfe8ee" stroke="#2f7fa8" strokeWidth="1.400" />
    <circle cx="7" cy="7" r="3.600" fill="#fff" />
    <path d="M12 12h6M12 15h6" stroke="#2f7fa8" strokeWidth="1.600" />
  </Ico>
);

const configs = ['Config1', 'Config2', 'Config3', 'Config4', 'Default'];
const docName = 'Mounting Plate Configuration Specific Dimensions 0007';

const DocWindow = ({ top, spec, active, display }: { top: number; spec: PartSpec; active: string; display: string }) => (
  <Win $mt={top}>
    <WinTitle>
      <PartIcon s={16} />
      <span>{docName}.SLDPRT *</span>
      <WinBtn><WinGlyph d="M4 3 2 5.500l2 2.500M7 3v5" /></WinBtn>
      <WinBtn><WinGlyph d="M7 3l2 2.500-2 2.500M4 3v5" /></WinBtn>
      <WinBtn><Ico w={13} h={7}><rect x=".5" y="1" width="12" height="5" fill="#eef3f8" stroke="#55708c" /></Ico></WinBtn>
      <WinBtn><Ico w={11} h={9}><rect x=".5" y=".5" width="10" height="8" fill="#c4d4e4" stroke="#3a4a5a" /><rect x="3" y="3" width="5" height="3" fill="#eef3f8" /></Ico></WinBtn>
      <WinBtn $close><Ico w={13} h={9}><path d="M2 1l9 7M11 1 2 8" stroke="#fff" strokeWidth="2.400" /></Ico></WinBtn>
    </WinTitle>
    <Client>
      <Main>
        <Panel>
          <PanelEdge />
          <PanelGrip><i /></PanelGrip>
          <PanelTabs>
            <PanelTab><PartIcon /></PanelTab>
            <PanelTab><ListIcon /></PanelTab>
            <PanelTab $active><TreeIcon /></PanelTab>
            <PanelTab><Crosshair /></PanelTab>
            <PanelTab><Ball /></PanelTab>
          </PanelTabs>
          <PanelHead $h={32} $pt={1}>Конфигурации</PanelHead>
          <Tree>
            <TreeRow $indent={7}>
              <Twist />
              <PartIcon />
              <span>{docName}</span>
            </TreeRow>
            {configs.map(c => {
              const on = c === active;
              return (
                <TreeRow key={c} $indent={50} $dim={!on}>
                  <ConfigIcon dim={!on} />
                  {on ? <Check /> : c === 'Default' || (active === 'Config2' && c === 'Config1') ? <Dash /> : <Check dim />}
                  <RowText $ml={3}>{c} [ {docName} ]</RowText>
                </TreeRow>
              );
            })}
          </Tree>
          <Hbar>
            <Chev dir="l" />
            <Thumb />
            <Fill />
            <Chev dir="r" />
          </Hbar>
          <PanelHead $h={23}>Состояния отображений (связанные)</PanelHead>
          <DisplayList>
            <TreeRow $indent={26}>
              <DisplayIcon />
              <span>{display}</span>
            </TreeRow>
          </DisplayList>
          <PanelFoot />
        </Panel>
        <Flap><i /></Flap>
        <Graphics>
          <Part spec={spec} />
          <ViewToolbar />
          <Orient>*Триметрия</Orient>
        </Graphics>
      </Main>
      <BottomBar>
        <NavCell>|◀</NavCell>
        <NavCell>◀</NavCell>
        <NavCell>▶</NavCell>
        <NavCell>▶|</NavCell>
        <SheetTab $w={67} $active>Модель</SheetTab>
        <SheetTab $w={108}>Motion Study 1</SheetTab>
      </BottomBar>
    </Client>
  </Win>
);

/* ---------- page ---------- */

const menus: [string, number][] = [['Файл', 43], ['Правка', 55], ['Вид', 35], ['Вставка', 56], ['Инструменты', 87], ['Окно', 45]];
const tabs: [string, number, boolean?][] = [
  ['Элементы', 72], ['Эскиз', 56], ['Листовой металл', 112], ['Сварные детали', 104],
  ['Прямое редактирование', 153], ['Анализировать', 104, true], ['Добавления SOLIDWORKS', 159],
];

export default function App() {
  return (
    <Root>
      <Global />
      <TitleBar>
        <Logo>
          <Ico w={22} h={20}>
            <path d="M2 4c6-3 9-2 8 0L4 17M8 10c2 3 2 6-3 8H1M13 6c3-2 7-2 8 0M20 8c-4-1-8 1-6 3s6 2 5 5-7 3-9 2" fill="none" stroke="#d9312b" strokeWidth="1.700" />
          </Ico>
          <div><b>SOLID</b><span>WORKS</span></div>
        </Logo>
        <Menu>
          {menus.map(([m, w]) => <MenuItem key={m} $w={w}>{m}</MenuItem>)}
          <Ico w={14} h={15}><path d="M5 1l8 5-3 1-1 4-3-2-5 5 3-7-2-2 3-1z" fill="#9a9a9a" /></Ico>
        </Menu>
        <Slot $w={16} />
        <Slot $w={30}>
          <Ico w={20} h={22}>
            <path d="M1 10 10 2l9 8" fill="none" stroke="#2f7fa8" strokeWidth="2.400" />
            <path d="M4 10v10h12V10M8 20v-6h4v6" fill="#fff" stroke="#333" />
          </Ico>
        </Slot>
        <Slot $w={30}>
          <Ico w={14} h={20}><path d="M1 1h8l4 4v14H1z" fill="#fbfbfb" stroke="#666" /></Ico>
        </Slot>
        <Slot $w={12}><Drop /></Slot>
        <Slot $w={34}>
          <Ico w={20} h={20}>
            <path d="M1 5h7l2 2h8l-3 12H1z" fill="#f8f3dc" stroke="#6a6a5a" />
            <path d="M9 1h5v4h3l-5 6-5-6h2z" fill="#3aa02a" stroke="#20701a" />
          </Ico>
        </Slot>
        <Slot $w={8}><Drop /></Slot>
        <Slot $w={34}>
          <Ico w={20} h={20}>
            <path d="M1 1h14l2 2v13H1z" fill="#3f7da8" stroke="#1d4a68" />
            <rect x="4" y="1.500" width="8" height="5" fill="#eef2f5" />
            <rect x="4" y="10" width="9" height="6" fill="#d8dde0" />
            <path d="M14 8l6 11H8z" fill="#f4c820" stroke="#7a6210" />
            <path d="M14 11.500v4M14 16.500v1.500" stroke="#222" />
          </Ico>
        </Slot>
        <Slot $w={12}><Drop /></Slot>
        <Slot $w={34}>
          <Ico w={20} h={20}>
            <rect x="4" y="1" width="12" height="7" fill="#f4f4f4" stroke="#444" />
            <rect x="1" y="7" width="18" height="7" fill="#2f7fa8" stroke="#1d4a68" />
            <rect x="4" y="12" width="12" height="7" fill="#fff" stroke="#444" />
          </Ico>
        </Slot>
        <Slot $w={8}><Drop /></Slot>
        <Slot $w={36}>
          <Ico w={18} h={18}><path d="M2 9 5 2v4c6-1 11 2 10 9-2-4-5-6-10-5v4z" fill="#e4e4e4" stroke="#c6c6c6" /></Ico>
        </Slot>
        <Slot $w={8}><Drop $off /></Slot>
        <Slot $w={36}>
          <Ico w={18} h={18}><path d="M16 9l-3-7v4C7 5 2 8 3 15c2-4 5-6 10-5v4z" fill="#e4e4e4" stroke="#c6c6c6" /></Ico>
        </Slot>
        <Slot $w={8}><Drop $off /></Slot>
        <Slot $w={4} />
        <SelectBtn><Arrow s={20} /></SelectBtn>
        <SelectDrop><Drop /></SelectDrop>
        <Slot $w={30}>
          <Ico w={12} h={22}>
            <rect x="1" y="1" width="10" height="20" rx="5" fill="#222" />
            <circle cx="6" cy="6.500" r="2.400" fill="#e03a2c" />
            <circle cx="6" cy="15.500" r="2.400" fill="#3aa548" />
          </Ico>
        </Slot>
        <Slot $w={30}>
          <Ico w={16} h={20}>
            <rect x=".5" y=".5" width="15" height="19" fill="#f6f6f6" stroke="#333" />
            <path d="M3 5h3M3 10h3M3 15h3" stroke="#2f7fa8" strokeWidth="2" />
            <path d="M8 5h5M8 10h5M8 15h5" stroke="#333" />
          </Ico>
        </Slot>
        <Slot $w={28}>
          <Ico w={18} h={18}>
            <path d="M9 1l1.500 2.500 3-.8.500 3 2.800 1.300-1.500 2 1.500 2-2.800 1.300-.5 3-3-.8L9 17l-1.500-2.500-3 .8-.5-3L1.200 11l1.500-2-1.500-2L4 5.700l.5-3 3 .8z" fill="#fff" stroke="#444" />
            <circle cx="9" cy="9" r="2.800" fill="none" stroke="#444" />
          </Ico>
        </Slot>
        <Slot $w={16}><Drop /></Slot>
        <DocTitle>{docName}.SLDPRT *</DocTitle>
        <Search>
          <Ico w={16} h={16}>
            <circle cx="8" cy="8" r="7" fill="#f4f8fb" stroke="#2f7fa8" strokeWidth="1.600" />
            <text x="8" y="12" fontSize="11" fontWeight="700" fill="#1d5878" textAnchor="middle" fontFamily="Liberation Sans">?</text>
          </Ico>
          <span>Поиск в Справке по SOLIDWORKS</span>
          <Ico w={14} h={14}>
            <circle cx="6" cy="6" r="4.500" fill="none" stroke="#9a9a9a" strokeWidth="1.300" />
            <path d="M9 9l4 4" stroke="#9a9a9a" strokeWidth="1.600" />
          </Ico>
          <Drop $off />
        </Search>
        <SysGlyph $w={36}>
          <Ico w={19} h={19}>
            <circle cx="9.500" cy="9.500" r="8.500" fill="#e8e8e8" stroke="#222" strokeWidth="1.600" />
            <circle cx="9.500" cy="7" r="3.500" fill="#222" />
            <path d="M3.500 15c1-4 11-4 12 0-3 3-9 3-12 0z" fill="#222" />
          </Ico>
        </SysGlyph>
        <SysGlyph $w={36}>
          <Ico w={19} h={19}>
            <circle cx="9.500" cy="9.500" r="8.500" fill="none" stroke="#444" strokeWidth="1.300" />
            <text x="9.500" y="14" fontSize="13" fill="#444" textAnchor="middle" fontFamily="Liberation Sans">?</text>
          </Ico>
        </SysGlyph>
        <SysGlyph $w={38}>
          <Ico w={10} h={12}><path d="M0 10h10" stroke="#555" strokeWidth="2.200" /></Ico>
        </SysGlyph>
        <SysGlyph $w={34}>
          <Ico w={15} h={15}>
            <path d="M4 4V1h10v8h-3" fill="none" stroke="#444" strokeWidth="1.400" />
            <rect x="1" y="5" width="9" height="9" fill="none" stroke="#444" strokeWidth="1.400" />
          </Ico>
        </SysGlyph>
        <SysGlyph $w={38}>
          <Ico w={12} h={12}><path d="M1 1l10 10M11 1 1 11" stroke="#444" strokeWidth="1.700" /></Ico>
        </SysGlyph>
      </TitleBar>

      <Ribbon>
        <BigBtn $w={108} $pl={4}>
          <BigIcon><Rb.Bolts /></BigIcon>
          <span>Исследование<br />проектирования</span>
          <BigDrop><Drop /></BigDrop>
        </BigBtn>
        <GroupSep />
        <BigBtn $w={100}><BigIcon><Rb.Interf /></BigIcon><span>Проверка<br />интерференции</span></BigBtn>
        <BigBtn $w={60}><BigIcon><Rb.Measure /></BigIcon><span>Измерить</span></BigBtn>
        <BigBtn $w={82}><BigIcon><Rb.Repair /></BigIcon><span>Исправление</span></BigBtn>
        <BigBtn $w={94}><BigIcon><Rb.Scale /></BigIcon><span>Массовые<br />характеристики</span></BigBtn>
        <BigBtn $w={96}><BigIcon><Rb.Section /></BigIcon><span>Характеристики<br />сечения</span></BigBtn>
        <BigBtn $w={50}><BigIcon><Rb.Gauge /></BigIcon><span>Датчик</span></BigBtn>
        <BigBtn $w={122}><BigIcon><Rb.Perf /></BigIcon><span>Оценка<br />производительности</span></BigBtn>
        <SmallCol $w={202} $pad={3}>
          <SmallRow><Rb.CheckCube /><span>Проверить</span></SmallRow>
          <SmallRow><Rb.GeoCube /><span>Анализ геометрии</span></SmallRow>
          <SmallRow $off><Rb.Diag /><span>Диагностика импортирования</span></SmallRow>
        </SmallCol>
        <SmallCol $w={122} $pad={7}>
          <SmallRow $off><Rb.Bodies /><span>Сравнение тел</span></SmallRow>
        </SmallCol>
        <GroupSep />
        <SmallCol $w={150} $pad={3}>
          <SmallRow><Rb.Deviation /><span>Анализ отклонения</span></SmallRow>
          <SmallRow><Rb.Zebra /><span>Черно-белые полосы</span></SmallRow>
          <SmallRow><Rb.Curv /><span>Кривизна</span></SmallRow>
        </SmallCol>
        <SmallCol $w={161} $pad={4}>
          <SmallRow><Rb.Draft /><span>Анализ уклона</span></SmallRow>
          <SmallRow><Rb.Undercut /><span>Анализ выточек</span></SmallRow>
          <SmallRow><Rb.Parting /><span>Анализ линии разъема</span></SmallRow>
        </SmallCol>
        <SmallCol $w={155} $pad={4}>
          <SmallRow><Rb.Symmetry /><span>Проверка симметрии</span></SmallRow>
          <SmallRow><Rb.Thick /><span>Анализ толщины</span></SmallRow>
          <SmallRow><Rb.Compare /><span>Сравнить документы</span></SmallRow>
        </SmallCol>
        <BigBtn $w={118}>
          <BigIcon><Rb.Active /></BigIcon>
          <span>Проверить<br />активный документ</span>
          <BigDrop><Drop /></BigDrop>
        </BigBtn>
        <GroupSep />
        <BigBtn $w={86} $off><BigIcon><Rb.Exp /></BigIcon><span>3DEXPERIENCE<br />Simulation<br />Connector</span></BigBtn>
        <BigBtn $w={95}><BigIcon><Rb.Xpress /></BigIcon><span>Помощник<br />выполнения<br />анализа<br />SimulationXpress</span></BigBtn>
        <BigBtn $w={80}><BigIcon><Rb.Flo /></BigIcon><span>Помощник<br />выполнения<br />анализа<br />FloXpress</span></BigBtn>
        <EndCol>
          <Ico w={10} h={10}><path d="M1 1l3.500 4L1 9M5.500 1 9 5 5.500 9" fill="none" stroke="#666" /></Ico>
          <Ico w={10} h={7}><path d="M1 6l4-4 4 4" fill="none" stroke="#333" strokeWidth="1.800" /></Ico>
        </EndCol>
      </Ribbon>

      <TabBar>
        {tabs.map(([t, w, a]) => <RibbonTab key={t} $w={w} $active={a}>{t}</RibbonTab>)}
      </TabBar>

      <Workspace>
        <Rail>
          <RailGrip />
          {[0, 1, 2, 3, 4, 5, 6].map(i => <RailBtn key={i}><GhostCube /></RailBtn>)}
          <RailSep $mt={2} />
          <RailBtn>
            <Ico w={20} h={20}>
              <path d="M4 3h12M2 6v9a4 4 0 0 0 4 4h8" fill="none" stroke="#2f7fa8" strokeWidth="2" />
              <path d="M3 1v5M1 3h5M1 1l4 4M5 1 1 5" stroke="#e8621e" />
              <path d="M11 8v10l3-2 2 3 1-1-2-3h3z" fill="#fff" stroke="#222" />
            </Ico>
          </RailBtn>
          <RailBtn>
            <Ico w={20} h={20}>
              <path d="M4 3v13h13" fill="none" stroke="#d0d0d0" strokeWidth="1.600" />
              <path d="M6 15 14 6a3 3 0 0 1 4-3l-2 3 2 2a3 3 0 0 1-4 1l-6 8z" fill="#e6e6e6" stroke="#c6c6c6" />
            </Ico>
          </RailBtn>
          <RailBtn>
            <Ico w={20} h={20}>
              <rect x="2" y="1" width="16" height="12" fill="#fff" stroke="#1d5878" strokeWidth="1.800" />
              <path d="M7 15h6M5 18h10" stroke="#222" strokeWidth="1.600" />
            </Ico>
          </RailBtn>
          <RailSep $mt={2} />
          <RailBtn>
            <Ico w={20} h={20}>
              <rect x="1" y="2" width="12" height="10" fill="#5ea9cd" stroke="#1d4a68" />
              <rect x="6" y="8" width="12" height="10" fill="#eef2f5" stroke="#1d4a68" />
              <path d="M8 11h8M8 14h8" stroke="#1d4a68" />
            </Ico>
          </RailBtn>
          <RailBtn>
            <Ico w={20} h={20}>
              <rect x="1" y="2" width="12" height="10" fill="#eef2f5" stroke="#1d4a68" />
              <rect x="6" y="8" width="12" height="10" fill="#5ea9cd" stroke="#1d4a68" />
              <path d="M3 5h8M3 8h3" stroke="#1d4a68" />
            </Ico>
          </RailBtn>
          <RailSep $mt={7} />
        </Rail>
        <DocWindow top={4} spec={plateA} active="Config2" display="Состояние отображения-9" />
        <DocWindow top={3} spec={plateB} active="Config1" display="Состояние отображения-8" />
        <TaskPane>
          <PaneTab $active>
            <Ico w={19} h={19}>
              <path d="M1 9 9.500 1 18 9" fill="none" stroke="#2f7fa8" strokeWidth="2" />
              <path d="M3 9v9h13V9M9 18v-6h4v6" fill="#fff" stroke="#333" />
            </Ico>
          </PaneTab>
          <PaneTab>
            <Ico w={18} h={18}><path d="M2 6l3-3v14H2zM5 3l4-1v15l-4 0zM9 2l3-1 2 1v14l-5 1zM14 2l3 1v13l-3 0z" fill="#eee" stroke="#444" /></Ico>
          </PaneTab>
          <PaneTab>
            <Ico w={19} h={17}>
              <path d="M1 2h6l2 2h7v3H5L1 15z" fill="#e6e6e6" stroke="#444" />
              <path d="M5 7h14l-4 9H1z" fill="#f8f8f8" stroke="#444" />
            </Ico>
          </PaneTab>
          <PaneTab>
            <Ico w={18} h={18}>
              <rect x="1" y="1" width="16" height="16" fill="#fff" stroke="#333" />
              <path d="M3 4h8v3H8v3h3v3H3v-3h3V7H3z" fill="#f2c832" stroke="#7a6210" />
              <rect x="12.500" y="3" width="3" height="3" fill="#f2c832" stroke="#7a6210" />
              <rect x="12.500" y="8" width="3" height="7" fill="#bbb" />
            </Ico>
          </PaneTab>
          <PaneTab><Ball s={17} /></PaneTab>
          <PaneTab><ListIcon /></PaneTab>
          <PaneTab>
            <Ico w={14} h={14}>
              <rect x="0" y="0" width="9" height="9" fill="#1010d8" />
              <rect x="4" y="5" width="9" height="9" fill="#d00808" />
            </Ico>
          </PaneTab>
        </TaskPane>
      </Workspace>

      <CommandBar>
        <CmdGrip />
        <CmdSlot><Ico w={14} h={16}><path d="M1 2h12L8.500 8v7h-3V8z" fill="#ececec" stroke="#c8c8c8" /></Ico></CmdSlot>
        <CmdSlot>
          <Ico w={19} h={19}>
            <path d="M1 1h10L7 6v4H5V6zM5 5h10l-4 5v4H9v-4zM9 9h9l-3 4v5h-2v-5z" fill="#f4f4f4" stroke="#c8c8c8" />
          </Ico>
        </CmdSlot>
        <CmdSlot>
          <Ico w={19} h={19}>
            <path d="M1 1h10L7 6v4H5V6zM5 5h10l-4 5v4H9v-4zM9 9h9l-3 4v5h-2v-5z" fill="#b855d0" stroke="#55226a" />
          </Ico>
        </CmdSlot>
        <SelectBtn $low><Arrow s={19} /></SelectBtn>
        <SelectDrop $low><Drop /></SelectDrop>
        <CmdSlot $w={26}>
          <Ico w={19} h={19}><path d="M4 1v13l3-3 3 6 2-1-3-6h5z" fill="#ddd" stroke="#c0c0c0" /><path d="M8 1l8 9-5 1" fill="#ddd" stroke="#c0c0c0" /></Ico>
        </CmdSlot>
        <CmdSlot $w={3} />
        <CmdSep />
        <CmdSlot $w={6.4} />
        {picks.map((g, i) => <CmdSlot key={i}><Pick>{g}</Pick></CmdSlot>)}
        <CmdSlot $w={2.5} />
        <CmdSep />
        {lastPicks.map((g, i) => <CmdSlot key={i} $w={26}><Pick>{g}</Pick></CmdSlot>)}
        <CmdEnd />
      </CommandBar>

      <Status>
        <span>{docName}</span>
        <StatusCell $left={1257}>Редактируется Деталь</StatusCell>
        <StatusCell $left={30}>
          <Ico w={15} h={15}>
            <path d="M6 1l6 9H0z" fill="#f4c820" stroke="#7a6210" />
            <path d="M12 1l-2 3h4zM12 4v6" stroke="#222" fill="#222" />
            <path d="M1 14h3M6 12v3M9 11v4M12 11v4" stroke="#2f7fa8" strokeWidth="1.600" />
          </Ico>
        </StatusCell>
        <StatusCell $left={66}>Настройка</StatusCell>
        <StatusCell $left={12}><Drop $up /></StatusCell>
        <StatusCell $left={25}>
          <Ico w={15} h={15}>
            <path d="M5 1l9 8-4 5-9-8z" fill="#fff" stroke="#555" />
            <path d="M4 4l7 6M6 2.500l7 6" stroke="#999" />
          </Ico>
        </StatusCell>
      </Status>
    </Root>
  );
}
